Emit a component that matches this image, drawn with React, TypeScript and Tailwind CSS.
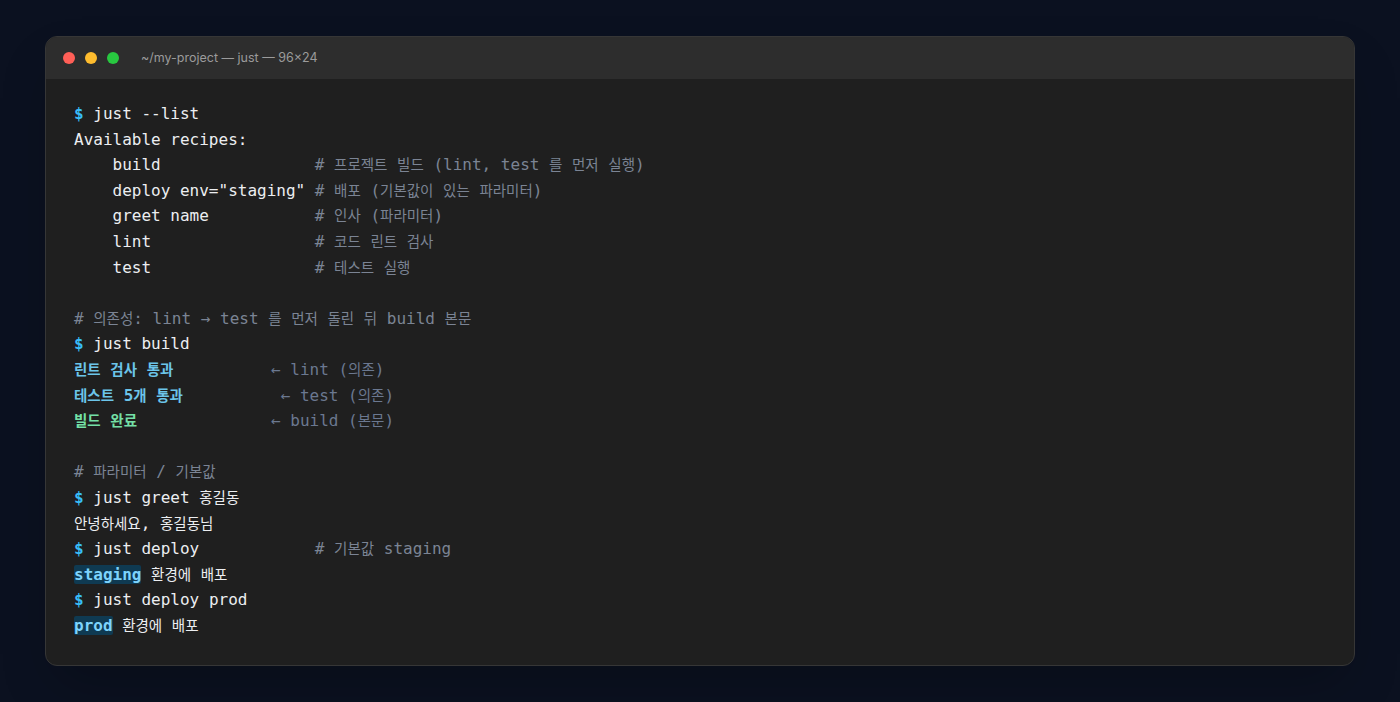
import React from 'react';

const HANGUL = /([\u3130-\u318F\uAC00-\uD7A3]+)/;

// Hangul runs get a slightly smaller size so they sit on the mono grid like the reference
const K = ({ children }: { children: string }) => (
  <>
    {children.split(HANGUL).map((part, i) =>
      HANGUL.test(part) ? (
        <span key={i} className="text-[14.5px] leading-none">{part}</span>
      ) : (
        <React.Fragment key={i}>{part}</React.Fragment>
      )
    )}
  </>
);

const Line = ({ children, className = '' }: { children?: React.ReactNode; className?: string }) => (
  <div className={'h-[25.6px] ' + className}>{children}</div>
);

const Prompt = ({ cmd, comment }: { cmd: string; comment?: string }) => (
  <Line>
    <span className="font-bold text-[#38bdf8]">$</span>
    <span className="text-[#eceef1]"> <K>{cmd}</K></span>
    {comment && <span className="text-[#7b8494]"><K>{comment}</K></span>}
  </Line>
);

const Comment = ({ text }: { text: string }) => (
  <Line className="text-[#7b8494]"><K>{text}</K></Line>
);

const Recipe = ({ name, desc }: { name: string; desc: string }) => (
  <Line>
    <span className="text-[#eceef1]">{name}</span>
    <span className="text-[#7b8494]"><K>{desc}</K></span>
  </Line>
);

const Step = ({ label, note, color }: { label: string; note: string; color: string }) => (
  <Line className="flex">
    <span className={'inline-block w-[197px] font-semibold ' + color}><K>{label}</K></span>
    <span className="text-[#6b7890]"><K>{note}</K></span>
  </Line>
);

const Deploy = ({ env }: { env: string }) => (
  <Line>
    <span className="font-bold text-[#7dd3fc] bg-[#0f3a52] rounded-[2px]">{env}</span>
    <span className="text-[#eceef1]"> <K>환경에 배포</K></span>
  </Line>
);

export default function App() {
  return (
    <div className="min-h-screen bg-[#0b1120] px-[45px] pt-[36px] pb-[37px]">
      <div className="rounded-[12px] border border-[#363636] bg-[#1f1f1f] overflow-hidden shadow-2xl">
        <div className="h-[42px] bg-[#2d2d2d] flex items-center px-[17px]">
          <div className="flex gap-[10px]">
            <span className="w-[12px] h-[12px] rounded-full bg-[#ff5f57]" />
            <span className="w-[12px] h-[12px] rounded-full bg-[#febc2e]" />
            <span className="w-[12px] h-[12px] rounded-full bg-[#28c840]" />
          </div>
          <span className="ml-[22px] text-[12.5px] text-[#9b9b9b] font-['Inter',sans-serif]">~/my-project — just — 96×24</span>
        </div>

        <div className="px-[28px] pt-[22px] pb-[27px] whitespace-pre text-[16px] leading-[25.6px] font-['DejaVu_Sans_Mono','Noto_Sans_CJK_KR',monospace] text-[#eceef1]">
          <Prompt cmd="just --list" />
          <Line>Available recipes:</Line>
          <Recipe name="    build" desc="                # 프로젝트 빌드 (lint, test 를 먼저 실행)" />
          <Recipe name={'    deploy env="staging"'} desc=" # 배포 (기본값이 있는 파라미터)" />
          <Recipe name="    greet name" desc="           # 인사 (파라미터)" />
          <Recipe name="    lint" desc="                 # 코드 린트 검사" />
          <Recipe name="    test" desc="                 # 테스트 실행" />
          <Line />

          <Comment text="# 의존성: lint → test 를 먼저 돌린 뒤 build 본문" />
          <Prompt cmd="just build" />
          <Step label="린트 검사 통과" note="← lint (의존)" color="text-[#6cc5ea]" />
          <Step label="테스트 5개 통과" note=" ← test (의존)" color="text-[#6cc5ea]" />
          <Step label="빌드 완료" note="← build (본문)" color="text-[#74e0a6]" />
          <Line />

          <Comment text="# 파라미터 / 기본값" />
          <Prompt cmd="just greet 홍길동" />
          <Line><K>안녕하세요, 홍길동님</K></Line>
          <Prompt cmd="just deploy" comment="            # 기본값 staging" />
          <Deploy env="staging" />
          <Prompt cmd="just deploy prod" />
          <Deploy env="prod" />
        </div>
      </div>
    </div>
  );
}
